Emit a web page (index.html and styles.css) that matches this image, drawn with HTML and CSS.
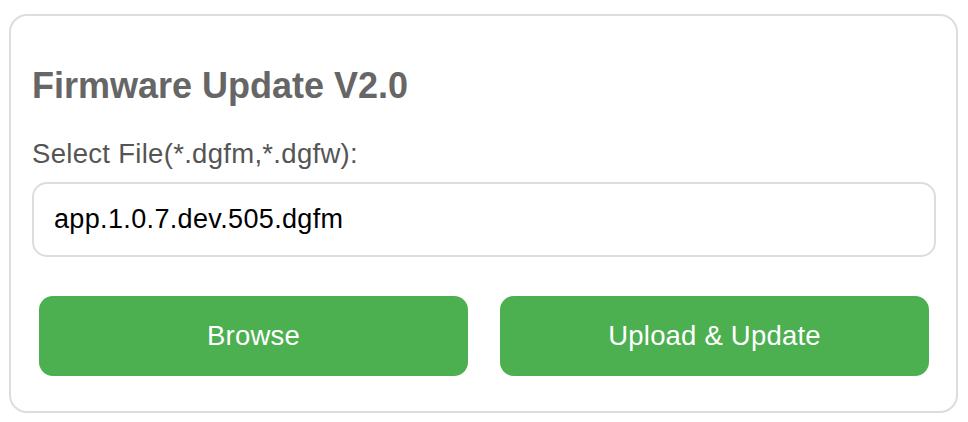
FILE: index.html
```html
<!DOCTYPE html>
<html lang="en">
<head>
<meta charset="utf-8">
<title>Firmware Update</title>
<link rel="stylesheet" href="styles.css">
</head>
<body>
  <div class="card">
    <h2 class="title">Firmware Update V2.0</h2>
    <label class="label" for="file">Select File(*.dgfm,*.dgfw):</label>
    <div class="file-field" id="file">app.1.0.7.dev.505.dgfm</div>
    <div class="actions">
      <button class="btn">Browse</button>
      <button class="btn">Upload &amp; Update</button>
    </div>
  </div>
</body>
</html>
```

FILE: styles.css
```css
* { box-sizing: border-box; }

html, body {
  margin: 0;
  background: #ffffff;
}

body {
  font-family: "Liberation Sans", Arial, sans-serif;
  padding: 14px 10px 9px 9px;
}

.card {
  display: flex;
  flex-direction: column;
  border: 2px solid #dddddd;
  border-radius: 18px;
  padding: 48px 20px 35px 21px;
  background: #ffffff;
}

.title {
  margin: 0;
  font-size: 36px;
  line-height: 43px;
  font-weight: bold;
  color: #666666;
}

.label {
  margin-top: 31px;
  font-size: 27.5px;
  line-height: 32px;
  letter-spacing: 0.3px;
  color: #555555;
}

.file-field {
  margin-top: 12px;
  height: 75px;
  display: flex;
  align-items: center;
  padding: 0 20px;
  border: 2px solid #dddddd;
  border-radius: 15px;
  font-size: 27px;
  letter-spacing: 0.35px;
  color: #000000;
}

.actions {
  margin-top: 39px;
  display: flex;
  gap: 32px;
  padding: 0 7px;
}

.btn {
  flex: 1;
  height: 80px;
  border: none;
  border-radius: 14px;
  background: #4caf50;
  color: #ffffff;
  font-family: "Liberation Sans", Arial, sans-serif;
  font-size: 27.5px;
  letter-spacing: 0.2px;
  cursor: pointer;
}
```
